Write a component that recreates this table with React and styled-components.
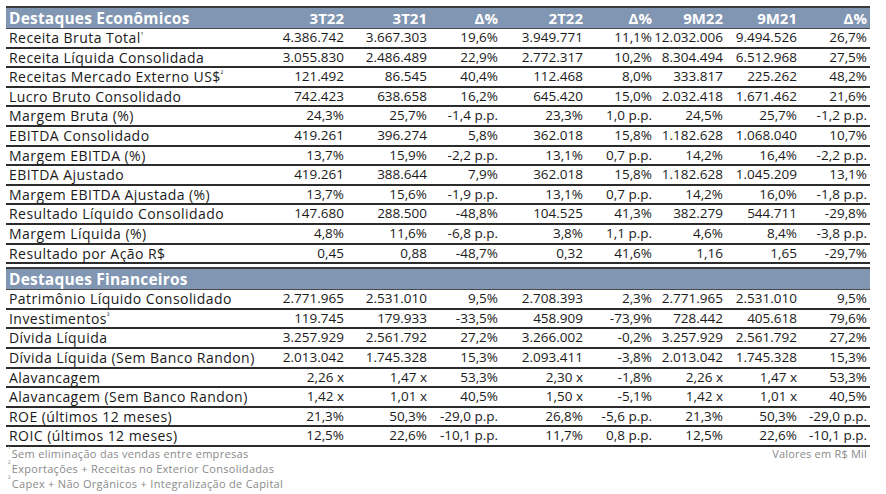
import styled, { createGlobalStyle } from 'styled-components';

const GlobalStyle = createGlobalStyle`
  body {
    margin: 0;
    background: #fff;
    font-family: "Open Sans", "Liberation Sans", sans-serif;
    color: #1a1a1a;
  }
`;

const columns = ['3T22', '3T21', 'Δ%', '2T22', 'Δ%', '9M22', '9M21', 'Δ%'];

const economic = [
    ['Receita Bruta Total', '¹', '4.386.742', '3.667.303', '19,6%', '3.949.771', '11,1%', '12.032.006', '9.494.526', '26,7%'],
    ['Receita Líquida Consolidada', '', '3.055.830', '2.486.489', '22,9%', '2.772.317', '10,2%', '8.304.494', '6.512.968', '27,5%'],
    ['Receitas Mercado Externo US$', '²', '121.492', '86.545', '40,4%', '112.468', '8,0%', '333.817', '225.262', '48,2%'],
    ['Lucro Bruto Consolidado', '', '742.423', '638.658', '16,2%', '645.420', '15,0%', '2.032.418', '1.671.462', '21,6%'],
    ['Margem Bruta (%)', '', '24,3%', '25,7%', '-1,4 p.p.', '23,3%', '1,0 p.p.', '24,5%', '25,7%', '-1,2 p.p.'],
    ['EBITDA Consolidado', '', '419.261', '396.274', '5,8%', '362.018', '15,8%', '1.182.628', '1.068.040', '10,7%'],
    ['Margem EBITDA (%)', '', '13,7%', '15,9%', '-2,2 p.p.', '13,1%', '0,7 p.p.', '14,2%', '16,4%', '-2,2 p.p.'],
    ['EBITDA Ajustado', '', '419.261', '388.644', '7,9%', '362.018', '15,8%', '1.182.628', '1.045.209', '13,1%'],
    ['Margem EBITDA Ajustada (%)', '', '13,7%', '15,6%', '-1,9 p.p.', '13,1%', '0,7 p.p.', '14,2%', '16,0%', '-1,8 p.p.'],
    ['Resultado Líquido Consolidado', '', '147.680', '288.500', '-48,8%', '104.525', '41,3%', '382.279', '544.711', '-29,8%'],
    ['Margem Líquida (%)', '', '4,8%', '11,6%', '-6,8 p.p.', '3,8%', '1,1 p.p.', '4,6%', '8,4%', '-3,8 p.p.'],
    ['Resultado por Ação R$', '', '0,45', '0,88', '-48,7%', '0,32', '41,6%', '1,16', '1,65', '-29,7%'],
];

const financial = [
    ['Patrimônio Líquido Consolidado', '', '2.771.965', '2.531.010', '9,5%', '2.708.393', '2,3%', '2.771.965', '2.531.010', '9,5%'],
    ['Investimentos', '³', '119.745', '179.933', '-33,5%', '458.909', '-73,9%', '728.442', '405.618', '79,6%'],
    ['Dívida Líquida', '', '3.257.929', '2.561.792', '27,2%', '3.266.002', '-0,2%', '3.257.929', '2.561.792', '27,2%'],
    ['Dívida Líquida (Sem Banco Randon)', '', '2.013.042', '1.745.328', '15,3%', '2.093.411', '-3,8%', '2.013.042', '1.745.328', '15,3%'],
    ['Alavancagem', '', '2,26 x', '1,47 x', '53,3%', '2,30 x', '-1,8%', '2,26 x', '1,47 x', '53,3%'],
    ['Alavancagem (Sem Banco Randon)', '', '1,42 x', '1,01 x', '40,5%', '1,50 x', '-5,1%', '1,42 x', '1,01 x', '40,5%'],
    ['ROE (últimos 12 meses)', '', '21,3%', '50,3%', '-29,0 p.p.', '26,8%', '-5,6 p.p.', '21,3%', '50,3%', '-29,0 p.p.'],
    ['ROIC (últimos 12 meses)', '', '12,5%', '22,6%', '-10,1 p.p.', '11,7%', '0,8 p.p.', '12,5%', '22,6%', '-10,1 p.p.'],
];

const notes = [
    ['¹', 'Sem eliminação das vendas entre empresas'],
    ['²', 'Exportações + Receitas no Exterior Consolidadas'],
    ['³', 'Capex + Não Orgânicos + Integralização de Capital'],
];

const Section = ({ title, rows, showColumns, spaced }) => (
    <>
        <HeadRow $spaced={spaced}>
            <Title>{title}</Title>
            {columns.map((c, i) => (
                <ColHead key={i}>{showColumns ? c : ''}</ColHead>
            ))}
        </HeadRow>
        {rows.map(([label, sup, ...values]) => (
            <Row key={label}>
                <Label>
                    {label}
                    {sup && <Sup>{sup}</Sup>}
                </Label>
                {values.map((v, i) => (
                    <Cell key={i}>{v}</Cell>
                ))}
            </Row>
        ))}
    </>
);

export default function App() {
    return (
        <Page>
            <GlobalStyle />
            <Table>
                <Section title="Destaques Econômicos" rows={economic} showColumns />
                <Section title="Destaques Financeiros" rows={financial} spaced />
            </Table>
            <Footer>
                <Notes>
                    {notes.map(([mark, text]) => (
                        <Note key={mark}>
                            <NoteMark>{mark}</NoteMark>
                            {text}
                        </Note>
                    ))}
                </Notes>
                <Units>Valores em R$ Mil</Units>
            </Footer>
        </Page>
    );
}

const Page = styled.div`
    padding: 6px 0 0 6px;
    width: 864px;
`;

const Table = styled.div`
    display: grid;
    grid-template-columns: 264px 77px 83px 71px 85px 69px 71px 74px 70px;
`;

const HeadRow = styled.div`
    display: contents;

    & > div {
        background: #8196b2;
        color: #fff;
        font-weight: 700;
        height: 23px;
        margin-top: ${(p) => (p.$spaced ? '3px' : '0')};
        box-sizing: border-box;
        border-top: 2px solid #3a3a3a;
        border-bottom: 1px solid #4a4a4a;
        display: flex;
        align-items: center;
        white-space: nowrap;
    }
`;

const Title = styled.div`
    font-size: 15.5px;
    padding-left: 3px;
    letter-spacing: 0.2px;
`;

const ColHead = styled.div`
    font-size: 15px;
    justify-content: flex-end;
    padding-right: 3px;
`;

const Row = styled.div`
    display: contents;

    & > div {
        height: 19.6px;
        box-sizing: border-box;
        border-bottom: 2px solid #2c2c2c;
        padding-bottom: 1.5px;
        display: flex;
        align-items: flex-end;
        line-height: 15px;
        font-weight: 500;
        white-space: nowrap;
    }
`;

const Label = styled.div`
    padding-left: 3px;
    font-size: 14px;
    letter-spacing: 0.45px;
`;

const Sup = styled.span`
    font-size: 7px;
    line-height: 1;
    align-self: flex-start;
    margin-top: 3px;
`;

const Cell = styled.div`
    justify-content: flex-end;
    padding-right: 3px;
    font-size: 13.5px;
`;

const Footer = styled.div`
    display: flex;
    justify-content: space-between;
    align-items: flex-start;
    margin-top: -1px;
`;

const Notes = styled.div`
    display: flex;
    flex-direction: column;
    padding-left: 2px;
`;

const Note = styled.div`
    font-size: 11px;
    letter-spacing: 0.3px;
    line-height: 15px;
    color: #8a8a8a;
    white-space: nowrap;
`;

const NoteMark = styled.span`
    font-size: 7px;
    line-height: 1;
    vertical-align: top;
    margin-right: 1px;
`;

const Units = styled.div`
    font-size: 11px;
    letter-spacing: 0.2px;
    line-height: 15px;
    color: #8a8a8a;
    padding-right: 3px;
`;
